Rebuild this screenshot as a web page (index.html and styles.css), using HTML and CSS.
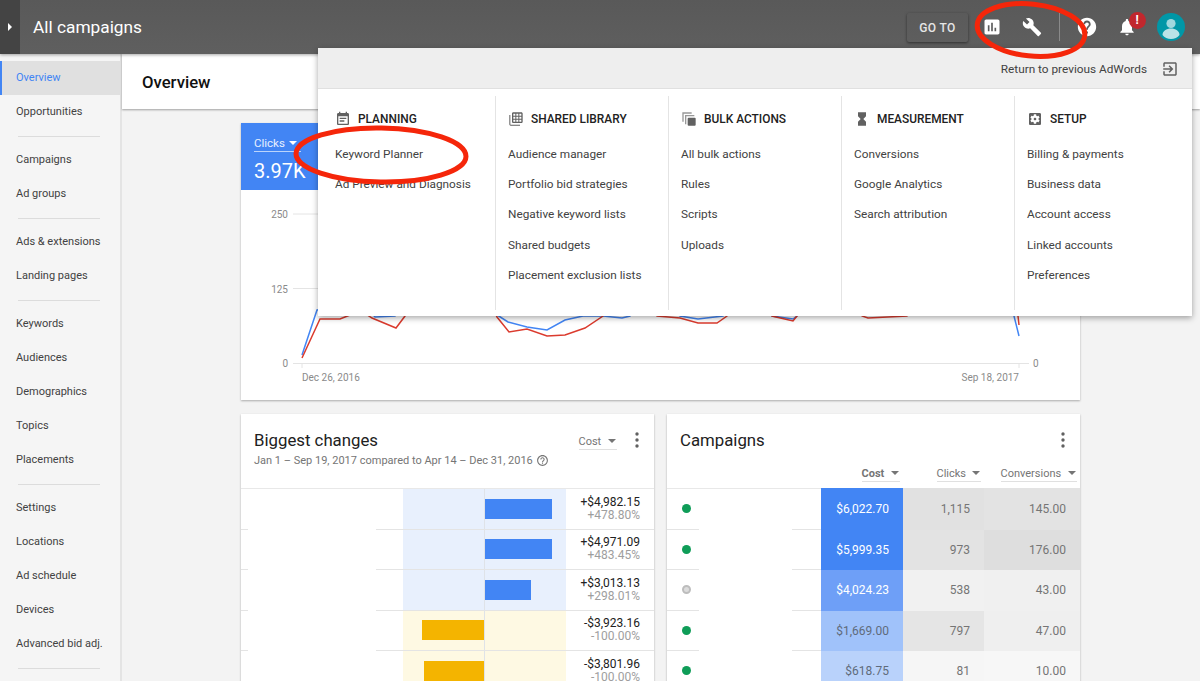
FILE: index.html
```html
<!DOCTYPE html>
<html lang="en">
<head>
<meta charset="utf-8">
<title>All campaigns - Overview</title>
<link rel="stylesheet" href="styles.css">
</head>
<body>
<div class="page">
  <header class="topbar">
    <div class="toggle"><span class="toggle-arrow"></span></div>
    <div class="account">All campaigns</div>
    <div class="goto">GO TO</div>
    <div class="tbtn"><svg viewBox="0 0 24 24" class="ic20"><path d="M19 3H5c-1.1 0-2 .9-2 2v14c0 1.1.9 2 2 2h14c1.1 0 2-.9 2-2V5c0-1.1-.9-2-2-2zM9 17H7v-7h2v7zm4 0h-2V7h2v10zm4 0h-2v-4h2v4z"/></svg></div>
    <div class="tbtn"><svg viewBox="0 0 24 24" class="ic20"><path d="M22.7 19l-9.1-9.1c.9-2.3.4-5-1.5-6.9-2-2-5-2.4-7.4-1.3L9 6 6 9 1.6 4.7C.4 7.1.9 10.1 2.9 12.1c1.9 1.9 4.6 2.4 6.9 1.5l9.1 9.1c.4.4 1 .4 1.4 0l2.3-2.3c.5-.4.5-1.1.1-1.4z"/></svg></div>
    <div class="tdiv"></div>
    <div class="tbtn"><svg viewBox="0 0 24 24" class="ic22"><path d="M12 2C6.48 2 2 6.48 2 12s4.48 10 10 10 10-4.48 10-10S17.52 2 12 2zm1 17h-2v-2h2v2zm2.07-7.75l-.9.92C13.45 12.9 13 13.5 13 15h-2v-.5c0-1.1.45-2.1 1.17-2.83l1.24-1.26c.37-.36.59-.86.59-1.41 0-1.1-.9-2-2-2s-2 .9-2 2H8c0-2.21 1.79-4 4-4s4 1.79 4 4c0 .88-.36 1.68-.93 2.25z"/></svg></div>
    <div class="tbtn bell"><svg viewBox="0 0 24 24" class="ic20"><path d="M12 22c1.1 0 2-.9 2-2h-4c0 1.1.89 2 2 2zm6-6v-5c0-3.07-1.64-5.64-4.5-6.32V4c0-.83-.67-1.5-1.5-1.5s-1.5.67-1.5 1.5v.68C7.63 5.36 6 7.92 6 11v5l-2 2v1h16v-1l-2-2z"/></svg><span class="badge">!</span></div>
    <div class="avatar"><svg viewBox="0 0 28 28" class="ic28"><circle cx="14" cy="14" r="14" fill="#0097a7"/><circle cx="14" cy="10.5" r="4.6" fill="#9fd8de"/><path d="M5.5 22c0-4 4-6.5 8.5-6.5s8.5 2.5 8.5 6.5c-2 2.5-5 4-8.5 4s-6.5-1.5-8.5-4z" fill="#b9e3e7"/></svg></div>
  </header>

  <div class="body">
    <nav class="sidebar">
      <div class="nav active">Overview</div>
      <div class="nav">Opportunities</div>
      <div class="nav-sep"></div>
      <div class="nav">Campaigns</div>
      <div class="nav">Ad groups</div>
      <div class="nav-sep"></div>
      <div class="nav">Ads &amp; extensions</div>
      <div class="nav">Landing pages</div>
      <div class="nav-sep"></div>
      <div class="nav">Keywords</div>
      <div class="nav">Audiences</div>
      <div class="nav">Demographics</div>
      <div class="nav">Topics</div>
      <div class="nav">Placements</div>
      <div class="nav-sep"></div>
      <div class="nav">Settings</div>
      <div class="nav">Locations</div>
      <div class="nav">Ad schedule</div>
      <div class="nav">Devices</div>
      <div class="nav">Advanced bid adj.</div>
      <div class="nav-sep"></div>
    </nav>

    <main class="main">
      <div class="titlebar">Overview</div>
      <div class="content">
        <section class="card chart-card">
          <div class="tile">
            <div class="tile-select"><span>Clicks</span><i class="caret caret-white"></i></div>
            <div class="tile-value">3.97K</div>
          </div>
          <svg class="chart" viewBox="241 190 839 210">
            <g class="grid">
              <line x1="293" y1="214" x2="330" y2="214"/>
              <line x1="293" y1="288.5" x2="330" y2="288.5"/>
              <line x1="293" y1="363.5" x2="1029" y2="363.5"/>
              <line x1="302" y1="363" x2="302" y2="368"/>
              <line x1="1019" y1="363" x2="1019" y2="368"/>
            </g>
            <polyline class="line-blue" points="302,355 317,310 365,305 375,317 395,316 410,300 490,300 497,315 508,322 527,327 547,330 565,320 583,316 603,316 622,318 630,316 640,300 670,300 680,316 698,319 723,316 735,300 760,300 772,316 793,319 797,316 805,300 1005,300 1014,316 1019,336"/>
            <polyline class="line-red" points="302,358 320,319 340,319 350,315 360,310 372,318 396,328 405,316 412,300 490,300 497,317 509,332 527,329 547,336 565,335 585,328 603,316 612,300 650,300 657,316 680,318 698,323 717,323 727,316 735,300 765,300 772,316 793,321 797,316 805,300 855,300 862,316 868,318 907,316 915,300 1005,300 1018,316 1019,325"/>
            <g class="axis">
              <text x="288" y="218" text-anchor="end">250</text>
              <text x="288" y="292.5" text-anchor="end">125</text>
              <text x="288" y="367" text-anchor="end">0</text>
              <text x="1033" y="367">0</text>
              <text x="302" y="381">Dec 26, 2016</text>
              <text x="1019" y="381" text-anchor="end">Sep 18, 2017</text>
            </g>
          </svg>
        </section>

        <div class="columns">
          <section class="card">
            <div class="card-head">
              <div class="card-top">
                <h2 class="card-title">Biggest changes</h2>
                <div class="drop cost-drop"><span>Cost</span><i class="caret"></i></div>
                <svg class="kebab" viewBox="0 0 4 16"><circle cx="2" cy="2" r="1.7"/><circle cx="2" cy="8" r="1.7"/><circle cx="2" cy="14" r="1.7"/></svg>
              </div>
              <div class="card-sub">Jan 1 – Sep 19, 2017 compared to Apr 14 – Dec 31, 2016
                <svg viewBox="0 0 24 24" class="ic13"><path d="M11 18h2v-2h-2v2zm1-16C6.48 2 2 6.48 2 12s4.48 10 10 10 10-4.48 10-10S17.52 2 12 2zm0 18c-4.41 0-8-3.59-8-8s3.59-8 8-8 8 3.59 8 8-3.59 8-8 8zm0-14c-2.21 0-4 1.79-4 4h2c0-1.1.9-2 2-2s2 .9 2 2c0 2-3 1.75-3 5h2c0-2.25 3-2.5 3-5 0-2.21-1.79-4-4-4z"/></svg>
              </div>
            </div>
            <div class="rows">
              <div class="row ch"><div class="lead"></div><div class="blank blank-a"></div><div class="tail tail-a"></div><div class="half blue"></div><div class="half blue right"><div class="bar bar-b" style="width:66.5px"></div></div><div class="val"><b>+$4,982.15</b><span>+478.80%</span></div></div>
              <div class="row ch"><div class="lead"></div><div class="blank blank-a"></div><div class="tail tail-a"></div><div class="half blue"></div><div class="half blue right"><div class="bar bar-b" style="width:66.5px"></div></div><div class="val"><b>+$4,971.09</b><span>+483.45%</span></div></div>
              <div class="row ch"><div class="lead"></div><div class="blank blank-a"></div><div class="tail tail-a"></div><div class="half blue"></div><div class="half blue right"><div class="bar bar-b" style="width:46px"></div></div><div class="val"><b>+$3,013.13</b><span>+298.01%</span></div></div>
              <div class="row ch"><div class="lead"></div><div class="blank blank-a"></div><div class="tail tail-a"></div><div class="half amber left"><div class="bar bar-a" style="width:62px"></div></div><div class="half amber right"></div><div class="val"><b>-$3,923.16</b><span>-100.00%</span></div></div>
              <div class="row ch"><div class="lead"></div><div class="blank blank-a"></div><div class="tail tail-a"></div><div class="half amber left"><div class="bar bar-a" style="width:60.5px"></div></div><div class="half amber right"></div><div class="val"><b>-$3,801.96</b><span>-100.00%</span></div></div>
            </div>
          </section>

          <section class="card">
            <div class="card-head">
              <div class="card-top">
                <h2 class="card-title">Campaigns</h2>
                <svg class="kebab" viewBox="0 0 4 16"><circle cx="2" cy="2" r="1.7"/><circle cx="2" cy="8" r="1.7"/><circle cx="2" cy="14" r="1.7"/></svg>
              </div>
              <div class="th-row">
                <div class="drop th-cost"><span>Cost</span><i class="caret"></i></div>
                <div class="drop th-clicks"><span>Clicks</span><i class="caret"></i></div>
                <div class="drop th-conv"><span>Conversions</span><i class="caret"></i></div>
              </div>
            </div>
            <div class="rows">
              <div class="row"><div class="lead lead-b"><i class="dot"></i></div><div class="blank blank-b"></div><div class="tail tail-b"></div><div class="num cost on" style="background:#4285f4">$6,022.70</div><div class="num clicks" style="background:#e1e1e1">1,115</div><div class="num conv" style="background:#e3e3e3">145.00</div></div>
              <div class="row"><div class="lead lead-b"><i class="dot"></i></div><div class="blank blank-b"></div><div class="tail tail-b"></div><div class="num cost on" style="background:#4285f4">$5,999.35</div><div class="num clicks" style="background:#e3e3e3">973</div><div class="num conv" style="background:#dedede">176.00</div></div>
              <div class="row"><div class="lead lead-b"><i class="dot dot-off"></i></div><div class="blank blank-b"></div><div class="tail tail-b"></div><div class="num cost on" style="background:#6e9ff7">$4,024.23</div><div class="num clicks" style="background:#f1f1f1">538</div><div class="num conv" style="background:#f0f0f0">43.00</div></div>
              <div class="row"><div class="lead lead-b"><i class="dot"></i></div><div class="blank blank-b"></div><div class="tail tail-b"></div><div class="num cost" style="background:#a0c2fa">$1,669.00</div><div class="num clicks" style="background:#e5e5e5">797</div><div class="num conv" style="background:#efefef">47.00</div></div>
              <div class="row"><div class="lead lead-b"><i class="dot"></i></div><div class="blank blank-b"></div><div class="tail tail-b"></div><div class="num cost" style="background:#b9d2fb">$618.75</div><div class="num clicks" style="background:#f6f6f6">81</div><div class="num conv" style="background:#f7f7f7">10.00</div></div>
            </div>
          </section>
        </div>
      </div>
    </main>
  </div>

  <div class="menu">
    <div class="menu-top">
      <span>Return to previous AdWords</span>
      <svg viewBox="0 0 24 24" class="ic18 grey"><path d="M10.09 15.59L11.5 17l5-5-5-5-1.41 1.41L12.67 11H3v2h9.67l-2.58 2.59zM19 3H5c-1.11 0-2 .9-2 2v4h2V5h14v14H5v-4H3v4c0 1.1.89 2 2 2h14c1.1 0 2-.9 2-2V5c0-1.1-.9-2-2-2z"/></svg>
    </div>
    <div class="menu-cols">
      <div class="mcol first">
        <div class="mhead"><svg viewBox="0 0 24 24" class="ic16 grey"><path d="M17 10H7v2h10v-2zm2-7h-1V1h-2v2H8V1H6v2H5c-1.11 0-1.99.9-1.99 2L3 19c0 1.1.89 2 2 2h14c1.1 0 2-.9 2-2V5c0-1.1-.9-2-2-2zm0 16H5V8h14v11zm-5-5H7v2h7v-2z"/></svg>PLANNING</div>
        <div class="mitem">Keyword Planner</div>
        <div class="mitem">Ad Preview and Diagnosis</div>
      </div>
      <div class="mcol">
        <div class="mhead"><svg viewBox="0 0 24 24" class="ic16 grey"><path d="M3 6H2v14c0 1.1.9 2 2 2h14v-1.5H4c-.3 0-.5-.2-.5-.5V6z"/><path fill-rule="evenodd" d="M8 2h12c1.1 0 2 .9 2 2v12c0 1.1-.9 2-2 2H8c-1.1 0-2-.9-2-2V4c0-1.1.9-2 2-2zm0 2v3h3V4H8zm4.5 0v3h3V4h-3zM17 4v3h3V4h-3zM8 8.5v3h3v-3H8zm4.5 0v3h3v-3h-3zm4.5 0v3h3v-3h-3zM8 13v3h3v-3H8zm4.5 0v3h3v-3h-3zm4.5 0v3h3v-3h-3z"/></svg>SHARED LIBRARY</div>
        <div class="mitem">Audience manager</div>
        <div class="mitem">Portfolio bid strategies</div>
        <div class="mitem">Negative keyword lists</div>
        <div class="mitem">Shared budgets</div>
        <div class="mitem">Placement exclusion lists</div>
      </div>
      <div class="mcol">
        <div class="mhead"><svg viewBox="0 0 24 24" class="ic16 grey"><path d="M2 2h14v2H4v12H2V2zm4 4h14v2H8v12H6V6z" opacity=".65"/><rect x="10" y="10" width="12" height="12" rx="1.5"/></svg>BULK ACTIONS</div>
        <div class="mitem">All bulk actions</div>
        <div class="mitem">Rules</div>
        <div class="mitem">Scripts</div>
        <div class="mitem">Uploads</div>
      </div>
      <div class="mcol">
        <div class="mhead"><svg viewBox="0 0 24 24" class="ic16 grey"><path d="M6 2v6h.01L6 8.01 10 12l-4 4 .01.01H6V22h12v-5.99h-.01L18 16l-4-4 4-3.99-.01-.01H18V2H6z"/></svg>MEASUREMENT</div>
        <div class="mitem">Conversions</div>
        <div class="mitem">Google Analytics</div>
        <div class="mitem">Search attribution</div>
      </div>
      <div class="mcol">
        <div class="mhead"><svg viewBox="0 0 24 24" class="ic16 grey"><path d="M12 10c-1.1 0-2 .9-2 2s.9 2 2 2 2-.9 2-2-.9-2-2-2zm7-7H5c-1.11 0-2 .9-2 2v14c0 1.1.89 2 2 2h14c1.11 0 2-.9 2-2V5c0-1.1-.89-2-2-2zm-1.75 9c0 .23-.02.46-.05.68l1.48 1.16c.13.11.17.3.08.45l-1.4 2.42c-.09.15-.27.21-.43.15l-1.74-.7c-.36.28-.76.51-1.18.69l-.26 1.85c-.03.17-.18.3-.35.3h-2.8c-.17 0-.32-.13-.35-.29l-.26-1.85c-.43-.18-.82-.41-1.18-.69l-1.74.7c-.16.06-.34 0-.43-.15l-1.4-2.42c-.09-.15-.05-.34.08-.45l1.48-1.16c-.03-.23-.05-.46-.05-.69 0-.23.02-.46.05-.68l-1.48-1.16c-.13-.11-.17-.3-.08-.45l1.4-2.42c.09-.15.27-.21.43-.15l1.74.7c.36-.28.76-.51 1.18-.69l.26-1.85c.03-.17.18-.3.35-.3h2.8c.17 0 .32.13.35.29l.26 1.85c.43.18.82.41 1.18.69l1.74-.7c.16-.06.34 0 .43.15l1.4 2.42c.09.15.05.34-.08.45l-1.48 1.16c.03.23.05.46.05.69z"/></svg>SETUP</div>
        <div class="mitem">Billing &amp; payments</div>
        <div class="mitem">Business data</div>
        <div class="mitem">Account access</div>
        <div class="mitem">Linked accounts</div>
        <div class="mitem">Preferences</div>
      </div>
    </div>
  </div>

  <svg class="marks" viewBox="0 0 1200 681">
    <ellipse cx="1031" cy="30" rx="54" ry="26" transform="rotate(6 1031 30)"/>
    <ellipse cx="381" cy="155" rx="85" ry="27" transform="rotate(1 381 155)"/>
  </svg>
</div>
</body>
</html>
```

FILE: styles.css
```css
* { box-sizing: border-box; }
html, body { margin: 0; padding: 0; }
body { font-family: Roboto, "Liberation Sans", sans-serif; color: #212121; background: #f3f3f3; }
.page { position: relative; width: 1200px; height: 681px; overflow: hidden; }

.ic13 { width: 13px; height: 13px; fill: #757575; vertical-align: -3px; }
.ic16 { width: 16px; height: 16px; flex: none; }
.ic18 { width: 18px; height: 18px; flex: none; }
.ic20 { width: 20px; height: 20px; fill: #fff; }
.ic22 { width: 22px; height: 22px; fill: #fff; }
.ic28 { width: 28px; height: 28px; display: block; }
.grey { fill: #616161; }

/* top bar */
.topbar { position: relative; z-index: 3; height: 54px; display: flex; align-items: center; padding-right: 15px; background: linear-gradient(#595959, #5f5f5f); box-shadow: 0 1px 3px rgba(0,0,0,.35); }
.toggle { width: 20px; height: 54px; background: #444; display: flex; align-items: center; justify-content: center; }
.toggle-arrow { width: 0; height: 0; border-left: 4px solid #fff; border-top: 4px solid transparent; border-bottom: 4px solid transparent; }
.account { margin-left: 13px; font-size: 17.3px; color: #fff; flex: 1; }
.goto { width: 61px; height: 29px; line-height: 31px; text-align: center; font-size: 12px; font-weight: 500; letter-spacing: .4px; color: #e6e6e6; border-radius: 2px; box-shadow: 0 1px 3px rgba(0,0,0,.5); margin-right: 4px; }
.tbtn { position: relative; width: 40px; height: 40px; display: flex; align-items: center; justify-content: center; }
.tdiv { width: 1px; height: 28px; background: #8a8a8a; margin: 0 7px; }
.badge { position: absolute; left: 21.5px; top: 4.5px; width: 17px; height: 17px; border-radius: 50%; background: #c1272d; color: #fff; font-size: 12px; font-weight: 700; line-height: 17px; text-align: center; }
.avatar { margin-left: 10px; width: 28px; height: 28px; }

/* layout */
.body { display: flex; height: 627px; }

.sidebar { width: 122px; flex: none; padding-top: 7px; background: #f5f5f5; border-right: 2px solid #e4e4e4; overflow: hidden; }
.nav { height: 34px; line-height: 34px; padding-left: 16px; font-size: 11px; color: #424242; white-space: nowrap; }
.nav.active { background: #e0e0e0; color: #4285f4; border-left: 2px solid #4285f4; padding-left: 14px; }
.nav-sep { height: 14px; padding: 6.5px 20px 0 18px; }
.nav-sep::before { content: ""; display: block; height: 1px; background: #dcdcdc; }

.main { flex: 1; min-width: 0; }
.titlebar { height: 55px; padding-left: 20px; line-height: 57px; font-size: 16.7px; font-weight: 500; color: #111; background: #fff; box-shadow: 0 1px 2px rgba(0,0,0,.35); }
.content { padding: 14px 120px 0 119px; }

.card { background: #fff; box-shadow: 0 1px 2px rgba(0,0,0,.3); }
.chart-card { height: 277px; position: relative; }
.tile { width: 94px; height: 67px; background: #4285f4; color: #fff; padding: 12px 0 0 13px; }
.tile-select { width: 47px; height: 17px; font-size: 11.5px; line-height: 14px; border-bottom: 1px solid #bcd4fb; color: #e8f0fe; display: flex; align-items: center; gap: 4px; padding-bottom: 1px; }
.tile-value { margin-top: 7px; font-size: 20px; line-height: 24px; }
.chart { display: block; width: 839px; height: 210px; }
.grid line { stroke: #e4e4e4; stroke-width: 1; }
.line-blue, .line-red { fill: none; stroke-width: 1.5; }
.line-blue { stroke: #4285f4; }
.line-red { stroke: #db3b2e; }
.axis text { font-size: 10px; fill: #8a8a8a; font-family: Roboto, sans-serif; }

.caret { display: inline-block; width: 0; height: 0; border-left: 4px solid transparent; border-right: 4px solid transparent; border-top: 4px solid #757575; }
.caret-white { border-top-color: #fff; }

.columns { display: grid; grid-template-columns: 413px 413px; gap: 13px; margin-top: 14px; }
.card-head { height: 74px; position: relative; }
.card-top { display: flex; align-items: center; padding: 13px 15.5px 0 13px; height: 39px; }
.card-title { flex: 1; margin: 0; font-size: 16.8px; font-weight: 400; color: #212121; }
.kebab { width: 4px; height: 16px; fill: #616161; flex: none; }
.card-sub { padding: 0 0 0 13px; font-size: 11px; line-height: 16px; color: #757575; }
.drop { display: flex; align-items: center; justify-content: space-between; font-size: 11px; color: #757575; border-bottom: 1px solid #e0e0e0; }
.cost-drop { width: 38px; height: 16px; margin: 3px 18px 0 0; padding-right: 1px; }
.th-row { display: flex; justify-content: flex-end; padding: 12px 3.5px 0 0; }
.th-row .drop { height: 17px; padding-right: 1px; }
.th-cost { width: 38px; font-weight: 700; margin-right: 37px; }
.th-clicks { width: 44px; margin-right: 20px; }
.th-conv { width: 76px; }

.rows { border-top: 1px solid #e8e8e8; }
.row { display: flex; height: 40.5px; }
.lead, .tail { border-bottom: 1px solid #e4e4e4; }
.lead { width: 7px; flex: none; }
.lead-b { width: 32px; display: flex; align-items: center; padding-left: 14.5px; }
.blank { flex: none; background: #fff; }
.blank-a { width: 128px; }
.blank-b { width: 93px; }
.tail-a { width: 27px; flex: none; }
.tail-b { width: 29px; flex: none; }
.half { width: 81px; flex: none; display: flex; align-items: center; border-bottom: 1px solid #e4e4e4; }
.half.blue { background: #e8f0fd; }
.half.amber { background: #fef9e3; }
.half.left { justify-content: flex-end; }
.half.right { width: 82px; border-left: 1px solid #dfe3e8; }
.bar { height: 20px; }
.bar-b { background: #4285f4; }
.bar-a { background: #f4b400; }
.val { flex: 1; display: flex; flex-direction: column; align-items: flex-end; justify-content: center; padding-right: 14px; font-size: 12px; line-height: 13px; border-bottom: 1px solid #e4e4e4; }
.val b { font-weight: 400; color: #212121; }
.val span { color: #9e9e9e; }
.num { height: 100%; display: flex; align-items: center; justify-content: flex-end; padding-right: 14px; font-size: 12px; color: #757575; flex: none; }
.row:first-child .num { height: calc(100% + 1px); margin-top: -1px; }
.cost { width: 82px; color: #5f6b7a; padding-right: 14px; }
.cost.on { color: #fff; }
.clicks { width: 81px; }
.conv { flex: 1; }
.dot { width: 9px; height: 9px; border-radius: 50%; background: #0f9d58; }
.dot-off { background: #dcdcdc; border: 2.5px solid #bdbdbd; }

/* dropdown menu */
.menu { position: absolute; z-index: 4; left: 318px; top: 48px; width: 874px; height: 268px; background: #fff; box-shadow: 0 2px 6px rgba(0,0,0,.35); }
.menu-top { height: 41px; padding-top: 1px; background: #eeeeee; border-bottom: 1px solid #e0e0e0; display: flex; align-items: center; justify-content: flex-end; gap: 14px; padding-right: 13px; font-size: 11.8px; color: #424242; }
.menu-cols { display: flex; padding-top: 7px; }
.mcol { width: 173px; height: 214px; padding: 15px 0 0 12px; border-left: 1px solid #e4e4e4; }
.mcol.first { width: 177px; padding-left: 17px; border-left: 0; }
.mcol:last-child { flex: 1; }
.mhead { height: 16px; display: flex; align-items: center; gap: 7px; font-size: 11.9px; font-weight: 500; color: #212121; margin-bottom: 11.7px; white-space: nowrap; }
.mitem { height: 30.4px; line-height: 30.4px; font-size: 11.8px; color: #424242; white-space: nowrap; }

/* hand-drawn annotations */
.marks { position: absolute; z-index: 5; left: 0; top: 0; width: 1200px; height: 681px; pointer-events: none; }
.marks ellipse { fill: none; stroke: #f5260a; stroke-width: 5; }
```
